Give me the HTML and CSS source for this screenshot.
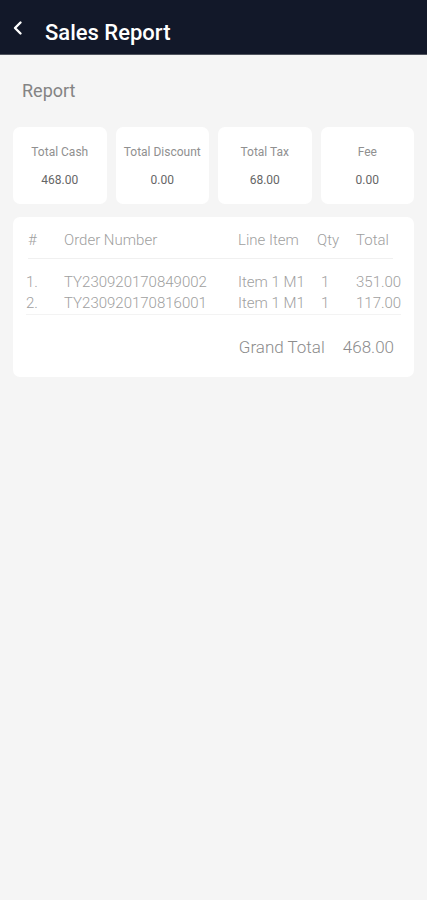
FILE: index.html
```html
<!DOCTYPE html>
<html lang="en">
<head>
    <meta charset="UTF-8">
    <meta name="viewport" content="width=device-width, initial-scale=1.0">
    <title>Sales Report</title>
    <link rel="stylesheet" href="styles.css">
</head>
<body>
    <div id="header">
        <svg class="backIcon" width="12" height="16" viewBox="0 0 12 16">
            <path d="M8.5 2.5 L3 8 L8.5 13.5" fill="none" stroke="#fff" stroke-width="2.4" stroke-linecap="round" stroke-linejoin="round"/>
        </svg>
        <div id="title">Sales Report</div>
    </div>

    <div id="content">
        <div id="sectionTitle">Report</div>

        <div id="summary">
            <div class="summaryCard">
                <div class="summaryLabel">Total Cash</div>
                <div class="summaryValue">468.00</div>
            </div>
            <div class="summaryCard">
                <div class="summaryLabel">Total Discount</div>
                <div class="summaryValue">0.00</div>
            </div>
            <div class="summaryCard">
                <div class="summaryLabel">Total Tax</div>
                <div class="summaryValue">68.00</div>
            </div>
            <div class="summaryCard">
                <div class="summaryLabel">Fee</div>
                <div class="summaryValue">0.00</div>
            </div>
        </div>

        <div id="orders">
            <div class="orderRow orderHead">
                <div>#</div>
                <div>Order Number</div>
                <div>Line Item</div>
                <div>Qty</div>
                <div>Total</div>
            </div>
            <div id="orderBody">
                <div class="orderRow">
                    <div>1.</div>
                    <div>TY230920170849002</div>
                    <div>Item 1 M1</div>
                    <div class="qty">1</div>
                    <div>351.00</div>
                </div>
                <div class="orderRow">
                    <div>2.</div>
                    <div>TY230920170816001</div>
                    <div>Item 1 M1</div>
                    <div class="qty">1</div>
                    <div>117.00</div>
                </div>
            </div>
            <div id="grandTotal">
                <span>Grand Total</span>
                <span>468.00</span>
            </div>
        </div>
    </div>
</body>
</html>
```

FILE: styles.css
```css
body {
    font-family: Roboto, "Noto Sans", sans-serif;
    background-color: #f5f5f5;
    margin: 0;
    padding: 0;
}

#header {
    background-color: #121829;
    height: 54px;
    border-bottom: 1px solid #50545e;
    display: flex;
    align-items: center;
    padding-left: 12px;
}

.backIcon {
    margin-top: 2px;
}

#title {
    color: #fff;
    font-size: 22px;
    font-weight: 500;
    margin-left: 21px;
    margin-top: 10px;
}

#content {
    padding: 0 13px;
}

#sectionTitle {
    color: #848484;
    font-size: 18px;
    line-height: 24px;
    margin-top: 24px;
    padding-left: 9px;
}

#summary {
    display: grid;
    grid-template-columns: repeat(4, 1fr);
    gap: 9px;
    margin-top: 24px;
}

.summaryCard {
    background-color: #fff;
    border-radius: 7px;
    padding: 17px 0 16px;
    text-align: center;
}

.summaryLabel {
    color: #909090;
    font-size: 12px;
    line-height: 16px;
}

.summaryValue {
    color: #666;
    font-size: 12px;
    line-height: 16px;
    margin-top: 12px;
}

#orders {
    background-color: #fff;
    border-radius: 7px;
    margin-top: 13px;
    padding: 13px 13px 18px;
}

.orderRow {
    display: grid;
    grid-template-columns: 38px 174px 79px 39px 1fr;
    color: #a0a0a0;
    font-size: 15px;
    font-weight: 300;
    line-height: 21px;
}

.orderHead {
    line-height: 20px;
    padding-bottom: 8px;
    border-bottom: 1px solid #f0f0f0;
    margin: 0 8px 0 2px;
    grid-template-columns: 36px 174px 79px 39px 1fr;
}

.qty {
    padding-left: 4px;
}

#orderBody {
    padding-top: 13px;
    border-bottom: 1px solid #f3f3f3;
}

#grandTotal {
    display: flex;
    justify-content: flex-end;
    gap: 18px;
    color: #8c8c8c;
    font-size: 17px;
    font-weight: 300;
    line-height: 24px;
    margin-top: 20px;
    padding-right: 7px;
}
```
